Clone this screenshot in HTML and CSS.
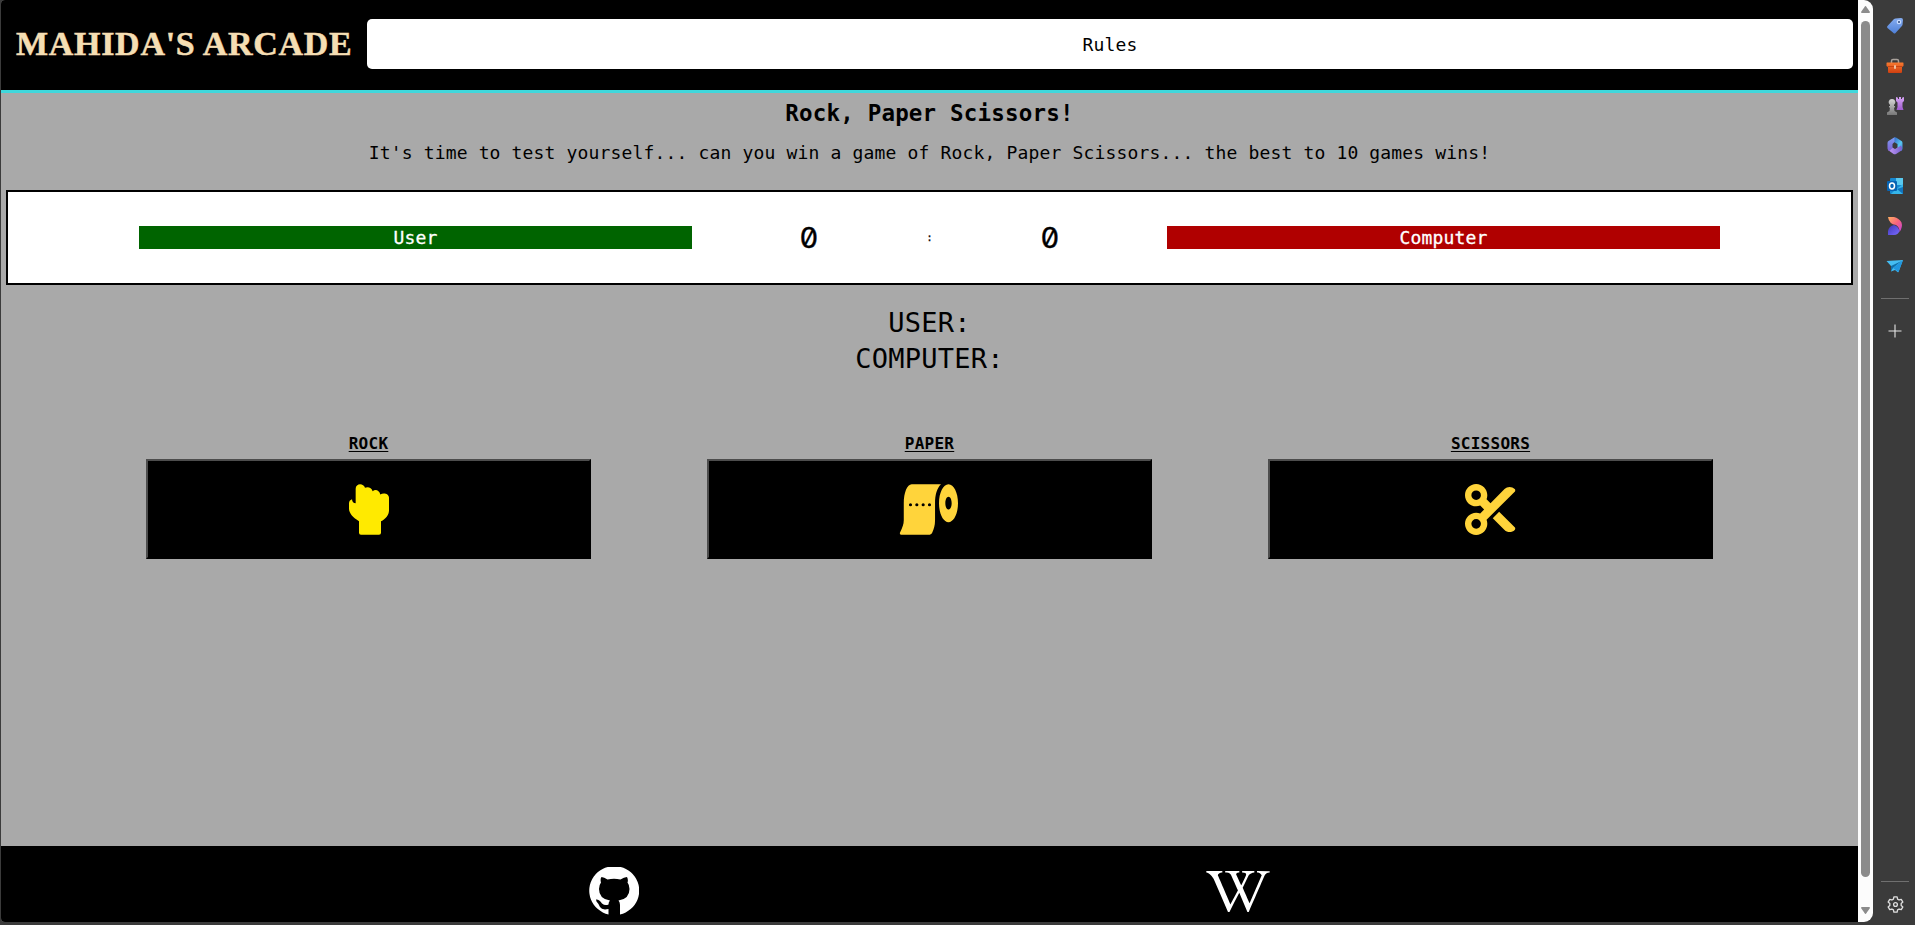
FILE: index.html
```html
<!DOCTYPE html>
<html lang="en">
<head>
<meta charset="utf-8">
<title>Mahida's Arcade</title>
<link rel="stylesheet" href="styles.css">
</head>
<body>
<div class="window">
  <div class="page">
    <header class="header">
      <h1 class="logo">MAHIDA'S ARCADE</h1>
      <button class="rules">Rules</button>
    </header>
    <main class="main">
      <h2 class="title">Rock, Paper Scissors!</h2>
      <p class="intro">It's time to test yourself... can you win a game of Rock, Paper Scissors... the best to 10 games wins!</p>
      <section class="score">
        <div class="player user">User</div>
        <div class="points">0</div>
        <div class="colon">:</div>
        <div class="points">0</div>
        <div class="player computer">Computer</div>
      </section>
      <section class="moves">
        <p>USER:</p>
        <p>COMPUTER:</p>
      </section>
      <section class="choices">
        <div class="choice">
          <h3 class="label">ROCK</h3>
          <button class="pick"><svg class="rock" viewBox="0 0 120 152"><path d="M36 152Q30 152 30 146V111C13 102 0 87 0 74V58Q0 48 9 45Q10 57 20 57V14C20-4 44-4 48 11C56 7 68 10 71 21C79 14 91 18 94 31C103 25 120 28 120 41V78C120 92 110 105 96 111V146Q96 152 90 152Z"/></svg></button>
        </div>
        <div class="choice">
          <h3 class="label">PAPER</h3>
          <button class="pick"><svg class="paper" viewBox="0 0 576 512"><path fill-rule="evenodd" d="M108 0C62 0 28 86 28 192v172c0 41-14 73-39 127C-14 501-8 512 4 512h277c14 0 26-9 34-22 17-38 29-72 29-126V192c0-84 20-154 60-192zM96 192a16 16 0 1 0 0 32 16 16 0 1 0 0-32zm64 0a16 16 0 1 0 0 32 16 16 0 1 0 0-32zm64 0a16 16 0 1 0 0 32 16 16 0 1 0 0-32zm64 0a16 16 0 1 0 0 32 16 16 0 1 0 0-32zM480 0c-53 0-96 86-96 192s43 192 96 192 96-86 96-192S533 0 480 0zm0 256c-18 0-32-29-32-64s14-64 32-64 32 29 32 64-14 64-32 64z"/></svg></button>
        </div>
        <div class="choice">
          <h3 class="label">SCISSORS</h3>
          <button class="pick"><svg class="scissors" viewBox="0 0 512 512"><path fill-rule="evenodd" d="M256 192l-39.500-39.500c4.900-12.600 7.500-26.200 7.500-40.500C224 50.100 173.900 0 112 0S0 50.100 0 112s50.100 112 112 112c14.300 0 27.900-2.700 40.500-7.500L192 256l-39.500 39.500c-12.600-4.900-26.200-7.500-40.500-7.500C50.100 288 0 338.100 0 400s50.100 112 112 112s112-50.100 112-112c0-14.300-2.700-27.900-7.500-40.500L499.200 76.800c7.100-7.100 7.100-18.500 0-25.600c-28.300-28.300-74.100-28.300-102.400 0L256 192zm22.600 150.600L396.800 460.800c28.300 28.300 74.100 28.300 102.400 0c7.100-7.100 7.100-18.500 0-25.600L342.600 278.600l-64 64zM64 112a48 48 0 1 1 96 0 48 48 0 1 1-96 0zm48 240a48 48 0 1 1 0 96 48 48 0 1 1 0-96z"/></svg></button>
        </div>
      </section>
    </main>
    <footer class="footer">
      <svg class="github" viewBox="0 0 50 48"><path d="M19.500 47.500V42Q13 43.500 11 40Q9.500 36.500 7.500 34.500L7 32.500Q10 32 13 36.500Q16 39 19.500 37.500Q19.500 35 21 33.500Q10 32 10 22Q10 18 12 15.500Q11 12 12.500 10Q15 10 18.500 12.500Q25 11 31.500 12.500Q35 10 38 10Q39.500 13 38.500 15.500Q40.500 18 40.500 22Q40.500 32 29.500 33.500Q31 35 31 38V47.500A25 24.500 0 1 0 19.500 47.500Z"/></svg>
      <svg class="wikipedia" viewBox="0 49 640 414"><path d="M640 51.200l-.3 12.200c-28.100.8-45 15.800-55.800 40.300-25 57.800-103.300 240-155.300 358.600H415l-81.900-193.100c-32.500 63.600-68.300 130-99.200 193.100-.3.3-15 0-15-.3C172 352.300 122.800 243.400 75.800 133.400 64.400 106.700 26.400 63.400.2 63.700c0-3.100-.3-10-.3-14.200h161.900v13.900c-19.200 1.100-52.800 13.300-43.300 34.200 21.900 49.700 103.600 240.300 125.600 288.600 15-29.700 57.800-109.200 75.300-142.800-13.900-28.300-58.600-133.900-72.800-160-9.700-17.800-36.100-19.400-55.800-19.700V49.800l142.500.3v13.100c-19.400.6-38.100 7.800-29.400 26.100 18.900 40 30.600 68.100 48.100 104.700 5.600-10.800 34.700-69.400 48.100-100.800 8.900-20.600-3.900-28.600-38.600-29.400.3-3.600 0-10.300.3-13.600 44.400-.3 111.100-.3 123.100-.6v13.600c-22.500.8-45.800 12.800-58.100 31.700l-59.200 122.800c6.400 16.100 63.300 142.800 69.200 156.700L559.200 91.800c-8.600-23.100-36.400-28.100-47.200-28.300V49.600l127.800 1.100z"/></svg>
    </footer>
  </div>
  <div class="scrollbar">
    <svg class="arrow" viewBox="0 0 9 7"><path d="M4.500 0Q5 0 5.500 1L9 6Q9 7 8 7H1Q0 7 0 6L3.500 1Q4 0 4.500 0Z"/></svg>
    <div class="thumb"></div>
    <svg class="arrow" viewBox="0 0 9 7"><path d="M4.500 7Q5 7 5.500 6L9 1Q9 0 8 0H1Q0 0 0 1L3.500 6Q4 7 4.500 7Z"/></svg>
  </div>
</div>
<aside class="sidebar">
  <svg class="defs" width="0" height="0"><defs>
    <linearGradient id="tag" x1="0" y1="0" x2="0" y2="1"><stop stop-color="#86adf0"/><stop offset="1" stop-color="#4f80d8"/></linearGradient>
    <linearGradient id="box" x1="0" y1="0" x2="0" y2="1"><stop stop-color="#f87a30"/><stop offset="1" stop-color="#cf3f10"/></linearGradient>
    <linearGradient id="pawn" x1="0" y1="0" x2="0" y2="1"><stop stop-color="#d5d5d5"/><stop offset="1" stop-color="#777"/></linearGradient>
    <linearGradient id="rook" x1="0" y1="0" x2="0" y2="1"><stop stop-color="#d7a5f5"/><stop offset="1" stop-color="#a05bd0"/></linearGradient>
    <linearGradient id="d1" x1="0" y1="0" x2="1" y2="1"><stop stop-color="#ffb060"/><stop offset=".5" stop-color="#f8657d"/><stop offset="1" stop-color="#c03ddf"/></linearGradient>
    <linearGradient id="d2" x1="0" y1="0" x2="1" y2="1"><stop stop-color="#3f36b8"/><stop offset="1" stop-color="#7a6bff"/></linearGradient>
    <linearGradient id="m1" x1="0" y1="0" x2="0" y2="1"><stop stop-color="#7d9df0"/><stop offset="1" stop-color="#7f62d8"/></linearGradient>
    <linearGradient id="m2" x1="0" y1="0" x2="1" y2="1"><stop stop-color="#2f66c8"/><stop offset=".6" stop-color="#58c8f0"/><stop offset="1" stop-color="#3f7fe0"/></linearGradient>
    <linearGradient id="m3" x1="0" y1="0" x2="1" y2="0"><stop stop-color="#c79cf5"/><stop offset="1" stop-color="#7560d0"/></linearGradient>
  </defs></svg>
  <svg class="tool" viewBox="0 0 18 18"><path fill="url(#tag)" d="M9.500 1.500L15 1Q17 1 17 3L16.500 8Q16 9 15 10L9.500 16Q8.500 17 7.500 16L1.500 11Q.5 10 1.500 9L8 2Q8.700 1.500 9.500 1.500Z"/><circle cx="13" cy="5" r="2.300" fill="#c8dcff"/><circle cx="13" cy="5" r="1" fill="#2c4a80"/></svg>
  <svg class="tool" viewBox="0 0 18 18"><path d="M5.500 6V4Q5.500 2.500 7 2.500H11Q12.500 2.500 12.500 4V6" fill="none" stroke="#aaa29c" stroke-width="1.500"/><path fill="url(#box)" d="M1 5.500H17Q17.500 5.500 17.500 6.500V9L16 10V15Q16 16 15 16H3Q2 16 2 15V10L.5 9V6.500Q.5 5.500 1 5.500Z"/><path d="M2 9.500H16" stroke="#b7370c" stroke-width=".7"/><rect x="8" y="8" width="2" height="4" rx="1" fill="#efc0a0"/></svg>
  <svg class="tool" viewBox="0 0 18 18"><path fill="url(#rook)" d="M10 0L12 .8V2H13V0H15V2H16V.8L18 0V4L16.500 5.500V10L17.500 13H10.500L11.500 10V5.500L10 4Z"/><path fill="url(#pawn)" d="M6 2A3.300 3.300 0 0 1 8 8V9H9V10.500H8L8.500 14L11 15.500V18H1V15.500L3.500 14L4 10.500H3V9H4V8A3.300 3.300 0 0 1 6 2Z"/></svg>
  <svg class="tool" viewBox="0 0 18 18"><path fill="url(#m2)" d="M8 .5Q9 0 10 .5L15.500 4Q16.500 4.700 16.500 6V11.500Q16.500 13 15 14L11.500 11V7L8 5Z"/><path fill="url(#m3)" d="M2 13L6.500 10.500L9 12L15 8.500Q17 11 15.500 13.500L10 17Q8.800 17.700 7.500 17Z"/><path fill="url(#m1)" d="M8.500 .3V5L6.500 7V11L3.500 14Q1.500 13 1.500 11.500V6Q1.500 4.700 2.500 4Z"/></svg>
  <svg class="tool" viewBox="0 0 18 18"><rect x="4" y="1" width="13" height="16" rx="1" fill="#1687d0"/><path d="M10 1H17V8H10Z" fill="#59c9ef"/><path d="M17 7L9 13L5 17H16Q17 17 17 16Z" fill="#35b5ea"/><path d="M11 12L17 17V10Z" fill="#1274bd"/><rect x="1" y="4" width="10" height="10" rx="1" fill="#0764b4"/><ellipse cx="6" cy="9" rx="2.500" ry="2.900" fill="none" stroke="#fff" stroke-width="1.500"/></svg>
  <svg class="tool" viewBox="0 0 18 18"><path fill="url(#d1)" d="M2 0H8Q13 1 15.500 5.500Q17 10 13.500 15Q13.500 10 10 8Q3 7 2 0Z"/><path fill="url(#d2)" d="M8 8Q12 9 13.500 14Q12 18 8 18H2V14Q3 9 8 8Z"/></svg>
  <svg class="tool" viewBox="0 0 18 18"><path fill="#45bdf2" d="M.5 4L17 3L12.500 15Q12 15.500 11.500 15L9 13L5 14.500V9Z"/><path fill="#126fa9" d="M5 9L15.500 4L7 11L5 14.500Z"/><path fill="#2196df" d="M7 11L17 3L12.500 15Z"/></svg>
  <div class="divider"></div>
  <svg class="plus" viewBox="0 0 14 14"><path d="M7 .5V13.500M.5 7H13.500" stroke="#e6e6e6" stroke-width="1.100"/></svg>
  <div class="divider last"></div>
  <svg class="gear" viewBox="0 0 18 18"><path fill="none" stroke="#dedede" stroke-width="1.400" stroke-linejoin="round" d="M7.300 1H10.700L11.200 3.300L12.800 4.200L15.100 3.500L16.800 6.400L15 8V10L16.800 11.600L15.100 14.500L12.800 13.800L11.200 14.700L10.700 17H7.300L6.800 14.700L5.200 13.800L2.900 14.500L1.200 11.600L3 10V8L1.200 6.400L2.900 3.500L5.200 4.200L6.800 3.300Z"/><circle cx="9" cy="9" r="2" fill="none" stroke="#dedede" stroke-width="1.400"/></svg>
</aside>
</body>
</html>
```

FILE: styles.css
```css
* { box-sizing: border-box; }

body {
  margin: 0;
  height: 925px;
  display: flex;
  overflow: hidden;
  background: #3b3b3b;
  color: #000;
  font-family: "DejaVu Sans Mono", monospace;
  letter-spacing: 0.16px;
}

h1, h2, h3, p { margin: 0; }
button { font: inherit; letter-spacing: inherit; padding: 0; }
svg { display: block; flex: none; }

.window {
  display: flex;
  width: 1872px;
  height: 922px;
  margin-left: 1px;
  border-radius: 4px 9px 9px 4px;
  overflow: hidden;
}

.page {
  width: 1857px;
  display: flex;
  flex-direction: column;
  background: #a9a9a9;
}

.header {
  height: 93px;
  display: flex;
  align-items: flex-start;
  padding: 19px 5px 0 15px;
  background: #000;
  border-bottom: 3px solid #40d8dc;
}

.logo {
  width: 351px;
  color: #f5deb3;
  font: bold 34px/50px "Liberation Serif", serif;
  letter-spacing: 0.7px;
  white-space: nowrap;
  -webkit-text-stroke: 0.5px #f5deb3;
}

.rules {
  flex: 1;
  height: 50px;
  border: 0;
  border-radius: 5px;
  background: #fff;
  color: #000;
  font-size: 18px;
  padding-top: 1px;
}

.main { flex: 1; }

.title {
  text-align: center;
  font-size: 22.5px;
  letter-spacing: 0.2px;
  line-height: 40px;
}

.intro {
  text-align: center;
  font-size: 18px;
  line-height: 40px;
}

.score {
  height: 95px;
  margin: 17px 5px 0;
  padding-left: 131px;
  display: grid;
  grid-template-columns: 553px 234px 7px 234px 553px;
  align-items: center;
  text-align: center;
  background: #fff;
  border: 2px solid #000;
}

.player {
  height: 23px;
  color: #fff;
  font-size: 18px;
  line-height: 24px;
  -webkit-text-stroke: 0.3px #fff;
}

.user { background: #006400; }
.computer { background: #b00000; }

.points {
  font-family: Inter, sans-serif;
  font-feature-settings: "zero";
  font-size: 29px;
  line-height: 32px;
  letter-spacing: 0;
  -webkit-text-stroke: 0.4px #000;
}

.colon {
  font-size: 10px;
  letter-spacing: 0;
  -webkit-text-stroke: 0.3px #000;
}

.moves {
  margin-top: 20px;
  text-align: center;
  font-size: 27px;
  letter-spacing: 0.24px;
  line-height: 36px;
}

.choices {
  display: flex;
  gap: 116px;
  padding-left: 145px;
  margin-top: 51px;
}

.choice { width: 445px; }

.label {
  text-align: center;
  font-size: 16px;
  letter-spacing: 0.27px;
  line-height: 31px;
  text-decoration: underline;
  text-decoration-thickness: 1px;
  text-underline-offset: 2px;
}

.pick {
  width: 445px;
  height: 100px;
  display: flex;
  align-items: center;
  justify-content: center;
  background: #000;
  border: 2px solid #000;
  border-top-color: #4d4d4d;
  border-left-color: #4d4d4d;
}

.rock { width: 40px; height: 51px; fill: #ffea00; }
.paper { width: 57px; height: 51px; fill: #ffd43b; overflow: visible; }
.scissors { width: 51px; height: 51px; fill: #ffd43b; }

.footer {
  height: 76px;
  display: flex;
  gap: 567px;
  padding: 21px 0 0 588px;
  background: #000;
  fill: #fff;
}

.github { width: 50px; height: 48px; }
.wikipedia { width: 64px; height: 41px; margin-top: 4px; }

.scrollbar {
  width: 15px;
  display: flex;
  flex-direction: column;
  align-items: center;
  padding-top: 6px;
  background: #fcfcfc;
}

.arrow { width: 9px; height: 7px; fill: #8b8b8b; }

.thumb {
  width: 9px;
  height: 856px;
  margin: 8px 0 30px;
  border-radius: 5px;
  background: #8b8b8b;
}

.sidebar {
  width: 42px;
  display: flex;
  flex-direction: column;
  align-items: center;
  padding: 17px 0 0 2px;
}

.defs { position: absolute; }
.tool { width: 18px; height: 18px; margin-bottom: 22px; }

.divider {
  width: 28px;
  height: 1px;
  margin-top: 1px;
  background: #707070;
}

.plus { width: 14px; height: 14px; margin-top: 25px; }
.last { margin-top: 543px; }
.gear { width: 17px; height: 17px; margin-top: 14px; }
```
